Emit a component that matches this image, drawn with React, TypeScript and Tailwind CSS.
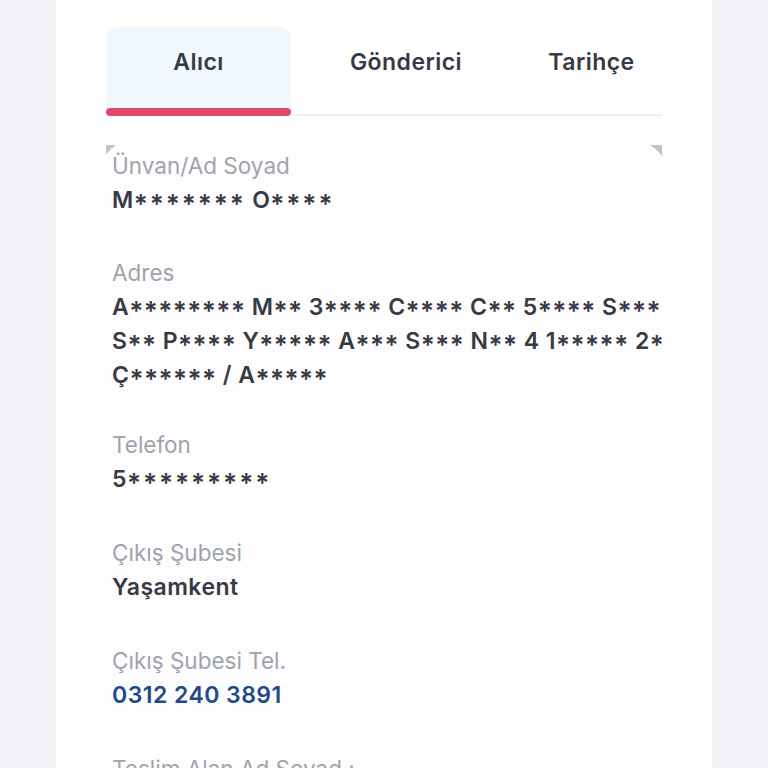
import React from "react";

const tabs = [
  { label: "Alıcı", width: "w-[185px]", active: true },
  { label: "Gönderici", width: "w-[230px]", active: false },
  { label: "Tarihçe", width: "flex-1", active: false },
];

// masked values: the asterisks sit lower and wider in the original font
const Masked: React.FC<{ text: string; tight?: boolean }> = ({ text, tight }) => (
  <>
    {text.split(/(\*+)/).map((part, i) =>
      part.startsWith("*") ? (
        <span
          key={i}
          className={`relative top-[5px] text-[26px] leading-[26px] ${tight ? "tracking-[0.5px]" : "tracking-[2px]"}`}
        >
          {part}
        </span>
      ) : (
        <span key={i}>{part}</span>
      )
    )}
  </>
);

const Field: React.FC<{ label: string; children: React.ReactNode; blue?: boolean; gap?: string }> = ({
  label,
  children,
  blue,
  gap = "mb-[40px]",
}) => (
  <div className={gap}>
    <p className="text-[22.5px] leading-[34px] text-[#9fa3ae]">{label}</p>
    <div
      className={`text-[23px] leading-[34px] font-semibold tracking-[0.02em] whitespace-nowrap ${
        blue ? "text-[#1e4a8c]" : "text-[#363a45]"
      }`}
    >
      {children}
    </div>
  </div>
);

export default function App() {
  return (
    <div className="min-h-screen bg-[#f2f3f6] flex justify-center font-['Inter','Noto_Sans',sans-serif]">
      <div className="w-[656px] bg-white px-[50px] pt-[27px] overflow-hidden h-[768px]">
        {/* Tabs */}
        <div className="flex">
          {tabs.map((t) => (
            <div key={t.label} className={`${t.width} flex flex-col`}>
              <div
                className={`h-[81px] pt-[21px] text-center text-[23px] leading-[28px] font-semibold tracking-[0.02em] text-[#363a45] ${
                  t.active ? "bg-[#f0f7fd] rounded-t-[12px]" : ""
                }`}
              >
                {t.label}
              </div>
              {t.active ? (
                <div className="h-[8px] rounded-full bg-[#e0496c]" />
              ) : (
                <div className="h-[8px] border-b-2 border-[#f1f1f4]" />
              )}
            </div>
          ))}
        </div>

        {/* Detail panel */}
        <div className="relative mt-[29px] bg-[#fdfdfd] pl-[6px] pt-[4px] shadow-[0_0_6px_rgba(0,0,0,0.03)]">
          <span className="absolute left-0 top-0 w-[9px] h-[9px] bg-[linear-gradient(135deg,#c4c4c8_50%,transparent_50%)]" />
          <span className="absolute right-0 top-0 w-[11px] h-[11px] bg-[linear-gradient(225deg,#c4c4c8_50%,transparent_50%)]" />

          <Field label="Ünvan/Ad Soyad" gap="mb-[39px]">
            <Masked text="M******* O****" />
          </Field>
          <Field label="Adres" gap="mb-[36px]">
            <span className="block">
              <Masked tight text="A******** M** 3**** C**** C** 5**** S***" />
            </span>
            <span className="block">
              <Masked tight text="S** P**** Y***** A*** S*** N** 4 1***** 2*" />
            </span>
            <span className="block">
              <Masked tight text="Ç****** / A*****" />
            </span>
          </Field>
          <Field label="Telefon">
            <Masked text="5*********" />
          </Field>
          <Field label="Çıkış Şubesi">Yaşamkent</Field>
          <Field label="Çıkış Şubesi Tel." blue>
            0312 240 3891
          </Field>
          <Field label="Teslim Alan Ad Soyad :">-</Field>
        </div>
      </div>
    </div>
  );
}
